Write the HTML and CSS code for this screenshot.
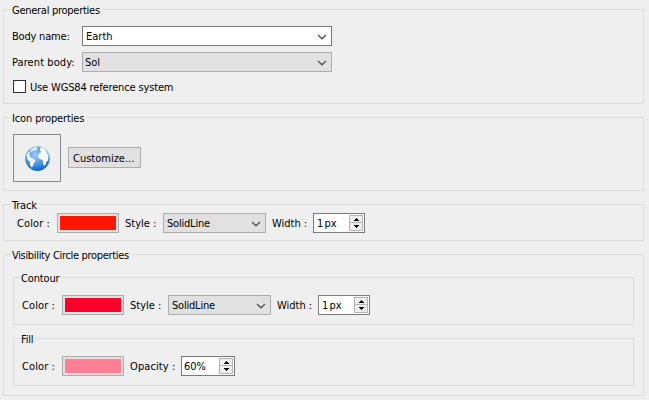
FILE: index.html
```
<!DOCTYPE html>
<html lang="en">
<head>
<meta charset="utf-8">
<title>Body properties</title>
<link rel="stylesheet" href="styles.css">
</head>
<body>
<svg class="defs" width="0" height="0">
  <symbol id="chevron" viewBox="0 0 10 6"><path d="M1 1l4 3.800L9 1" fill="none" stroke="#505050" stroke-width="1.3"/></symbol>
  <symbol id="up" viewBox="0 0 5 3"><path d="M2 0h1v1h1v1h1v1H0V2h1V1h1z"/></symbol>
  <symbol id="down" viewBox="0 0 5 3"><path d="M0 0h5v1H4v1H3v1H2V2H1V1H0z"/></symbol>
</svg>
<main class="panel">
  <section class="group general">
    <h2 class="legend t-general">General properties</h2>
    <div class="row name"><label class="t-body">Body name:</label><div class="combo editable"><span class="t-earth">Earth</span><svg class="chev"><use href="#chevron"/></svg></div></div>
    <div class="row parent"><label class="t-parent">Parent body:</label><div class="combo"><span class="t-sol">Sol</span><svg class="chev"><use href="#chevron"/></svg></div></div>
    <div class="row check"><i class="box"></i><label class="t-wgs">Use WGS84 reference system</label></div>
  </section>
  <section class="group icon">
    <h2 class="legend t-icon">Icon properties</h2>
    <div class="row icons">
      <div class="preview">
        <svg width="26" height="26" viewBox="0 0 26 26">
          <defs>
            <radialGradient id="sea" cx=".4" cy=".35" r=".7"><stop offset="0" stop-color="#a3c6f6"/><stop offset=".45" stop-color="#639dea"/><stop offset=".8" stop-color="#1d80d2"/><stop offset="1" stop-color="#1266cc"/></radialGradient>
            <linearGradient id="rim" x2="0" y2="1"><stop offset="0" stop-color="#9ccbe9"/><stop offset=".5" stop-color="#5aa6e4"/><stop offset="1" stop-color="#0f50d0"/></linearGradient>
          </defs>
          <circle cx="13.500" cy="13.500" r="12" fill="url(#sea)" stroke="url(#rim)"/>
          <path d="M7 4.500L9.500 2.800 12 2l2 .7-2 1.300 1.500.8-2 1.200-1.500-1-2 1.500-2 .5z" fill="#e4f1fc"/>
          <path d="M2.500 10l2-3 1.500.5-1 2.500 1.500 2.500 3.500 1.500 1.500 2-1.700 2-.5 2.300-1.500 2.200-1.500-1.500-.5-4-2.300-2.500z" fill="#f2f9fe"/>
          <path d="M16 3l3-.5 3 3 2.500 5-.2 5-1.800 1-.5 2.500-1.500 2-1.500-2-.3-4-3.700-1.200-1-2.800 1.500-3 2-1-1.500-1.500z" fill="#f5faff"/>
        </svg>
      </div>
      <button class="custom"><span class="t-custom">Customize...</span></button>
    </div>
  </section>
  <section class="group track">
    <h2 class="legend t-track">Track</h2>
    <div class="row line">
      <label class="color">Color :</label><button class="swatch"><i class="track-color"></i></button>
      <label class="style">Style :</label><div class="combo small"><span class="t-solid">SolidLine</span><svg class="chev"><use href="#chevron"/></svg></div>
      <label class="width">Width :</label><div class="spin"><span class="t-px">1 px</span><div class="steps"><b><svg><use href="#up"/></svg></b><b><svg><use href="#down"/></svg></b></div></div>
    </div>
  </section>
  <section class="group visibility">
    <h2 class="legend t-vis">Visibility Circle properties</h2>
    <section class="group inner contour">
      <h3 class="legend t-contour">Contour</h3>
      <div class="row line">
        <label class="color">Color :</label><button class="swatch"><i class="contour-color"></i></button>
        <label class="style">Style :</label><div class="combo small"><span class="t-solid">SolidLine</span><svg class="chev"><use href="#chevron"/></svg></div>
        <label class="width">Width :</label><div class="spin"><span class="t-px">1 px</span><div class="steps"><b><svg><use href="#up"/></svg></b><b><svg><use href="#down"/></svg></b></div></div>
      </div>
    </section>
    <section class="group inner fill">
      <h3 class="legend t-fill">Fill</h3>
      <div class="row line">
        <label class="color">Color :</label><button class="swatch"><i class="fill-color"></i></button>
        <label class="opacity">Opacity :</label><div class="spin percent"><span class="t-pct">60%</span><div class="steps"><b><svg><use href="#up"/></svg></b><b><svg><use href="#down"/></svg></b></div></div>
      </div>
    </section>
  </section>
</main>
</body>
</html>
```
FILE: styles.css
```
* { box-sizing: border-box; }
body { margin: 0; background: #efefef; color: #000; font: 11px/14px "DejaVu Sans Condensed", "DejaVu Sans", sans-serif; font-stretch: condensed; overflow: hidden; }
.defs { position: absolute; }
.panel { display: flex; flex-direction: column; gap: 13px; width: 641px; margin: 9px 0 0 3px; }
.group { border: 1px solid #dcdcdc; }
.general { height: 95px; }
.icon { height: 74px; }
.track { height: 37px; }
.visibility { height: 142px; }
.inner { width: 621px; height: 48px; margin-left: 9px; }
.contour { margin-top: 15px; }
.fill { margin-top: 13px; }
.legend { margin: -7px 0 0 7px; padding: 0 2px 0 1px; height: 14px; line-height: 16px; width: max-content; background: #efefef; font-size: inherit; font-weight: 400; white-space: nowrap; }
.inner .legend { margin-left: 6px; }
.row { display: flex; align-items: center; height: 20px; padding-left: 8px; }
.row label { white-space: nowrap; flex: none; }
.row label, .row span { padding-top: 2px; }
.t-general { letter-spacing: -.27px; }
.t-body { letter-spacing: -.2px; }
.t-parent { letter-spacing: .08px; }
.t-wgs { letter-spacing: -.15px; }
.t-icon { letter-spacing: -.13px; }
.t-vis { letter-spacing: -.33px; }
.t-contour { letter-spacing: -.14px; }
.t-track, .t-fill { letter-spacing: -.2px; }
.t-solid { letter-spacing: -.2px; }
.t-px { word-spacing: -2px; }
.name { margin-top: 9px; }
.name label, .parent label { width: 70px; }
.parent { margin-top: 6px; }
.check { height: 13px; margin-top: 8px; padding-left: 9px; }
.box { width: 13px; height: 13px; border: 1px solid #333; background: #fff; margin-right: 4px; }
.combo { display: flex; align-items: center; justify-content: space-between; width: 250px; height: 20px; padding: 0 4px 0 2px; border: 1px solid #adadad; background: #e1e1e1; white-space: nowrap; }
.editable { background: #fff; border-color: #7a7a7a; padding-left: 3px; }
.combo.small { width: 103px; padding-left: 3px; }
.chev { width: 10px; height: 6px; margin-top: 2px; }
.icons { height: 48px; margin-top: 9px; padding-left: 9px; }
.preview { display: flex; align-items: center; justify-content: center; width: 48px; height: 48px; border: 1px solid #828790; }
.custom { display: flex; align-items: center; width: 73px; height: 21px; margin: -1px 0 0 7px; padding: 0 0 0 4px; border: 1px solid #adadad; background: #e1e1e1; font: inherit; color: inherit; white-space: nowrap; }
.line { margin-top: 1px; padding-left: 13px; }
.inner .line { margin-top: 10px; padding-left: 8px; }
.color { width: 40px; letter-spacing: .1px; }
.style { width: 38px; }
.width { width: 41px; }
.opacity { width: 51px; letter-spacing: .1px; }
.swatch { display: flex; width: 62px; height: 20px; margin: 0 6px 0 0; padding: 2px; border: 1px solid #adadad; background: #e1e1e1; }
.swatch i { width: 56px; height: 14px; }
.track-color { background: #ff1500; }
.contour-color { background: #ff002b; }
.fill-color { background: #ff8095; }
.combo.small + .width { margin-left: 6px; }
.spin { display: flex; align-items: center; justify-content: space-between; width: 52px; height: 20px; border: 1px solid #7a7a7a; background: #fff; padding: 0 1px 0 3px; white-space: nowrap; }
.percent { width: 54px; padding-left: 2px; }
.steps { width: 14px; height: 16px; }
.steps b { display: flex; align-items: center; justify-content: center; height: 8px; border: 1px solid #b4b4b4; background: #efefef; }
.steps b + b { border-top-width: 0; }
.steps svg { width: 5px; height: 3px; }
```
